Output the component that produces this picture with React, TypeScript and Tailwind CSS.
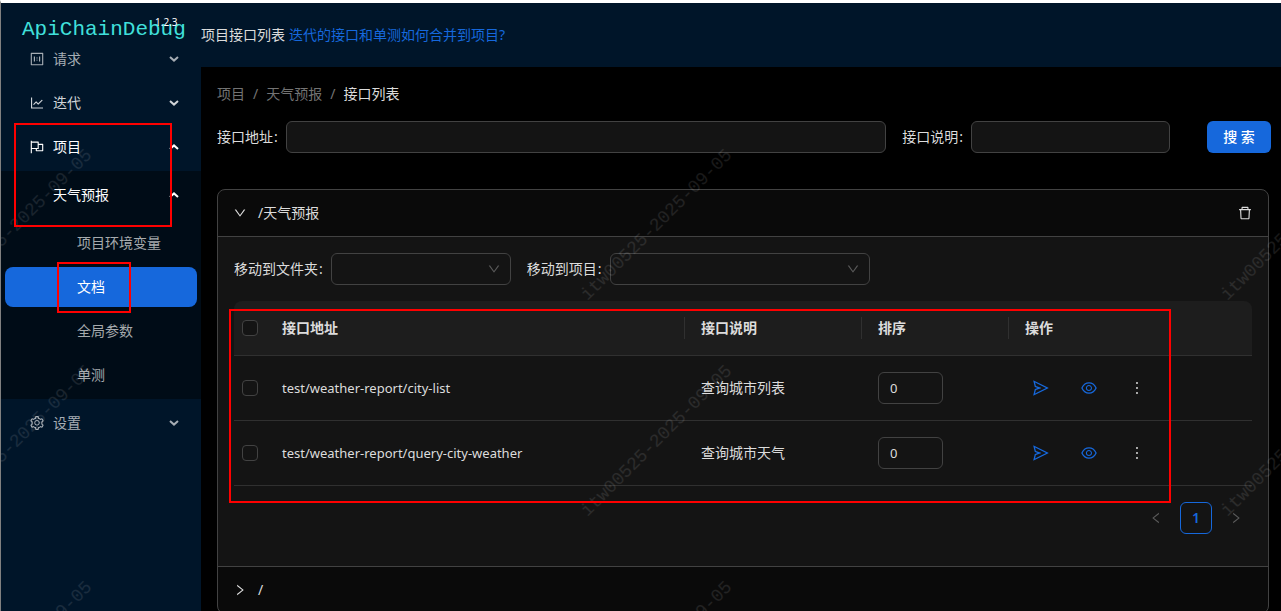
import type { ReactNode } from "react";
import {
  AiOutlineDelete,
  AiOutlineDown,
  AiOutlineEye,
  AiOutlineFlag,
  AiOutlineLeft,
  AiOutlineLineChart,
  AiOutlineMore,
  AiOutlineOneToOne,
  AiOutlineRight,
  AiOutlineSend,
  AiOutlineSetting,
} from "react-icons/ai";

function Caret({ open = false }: { open?: boolean }) {
  return (
    <svg viewBox="0 0 10 6" className="ml-auto h-[6px] w-[10px]" fill="none" stroke="currentColor" strokeWidth="2">
      {open ? <path d="M1 5 L5 1.4 L9 5" /> : <path d="M1 1 L5 4.6 L9 1" />}
    </svg>
  );
}

function MenuGroup({ icon, label, open, tone }: { icon?: ReactNode; label: string; open?: boolean; tone: string }) {
  return (
    <button
      type="button"
      aria-expanded={!!open}
      className={`mx-1 flex h-10 items-center gap-2 rounded-lg pr-[18px] ${icon ? "pl-6" : "pl-12"} ${tone}`}
    >
      {icon}
      <span>{label}</span>
      <Caret open={open} />
    </button>
  );
}

const docs = [
  { label: "项目环境变量", active: false },
  { label: "文档", active: true },
  { label: "全局参数", active: false },
  { label: "单测", active: false },
];

function Sidebar() {
  return (
    <aside className="flex w-[200px] shrink-0 flex-col bg-[#001529]">
      <div className="relative flex h-9 items-center pt-[18px] pl-[21px] font-['Liberation_Mono',monospace] text-[21px] leading-9 text-[#40e0dc]">
        ApiChainDebug
        <span className="absolute top-[13px] left-[154px] font-['Noto_Sans',sans-serif] text-[10px] leading-3 text-white">
          1.2.3
        </span>
      </div>
      <nav className="flex flex-col gap-1">
        <MenuGroup icon={<AiOutlineOneToOne size={16} />} label="请求" tone="text-[#a6adb4]" />
        <MenuGroup icon={<AiOutlineLineChart size={16} />} label="迭代" tone="text-[#d0d4d8]" />
        <MenuGroup icon={<AiOutlineFlag size={16} />} label="项目" open tone="text-white" />
        <div className="flex flex-col gap-1 bg-[#000c17] py-1">
          <MenuGroup label="天气预报" open tone="text-white" />
          <ul className="flex flex-col gap-1 pt-1">
            {docs.map((d) => (
              <li key={d.label} className="px-1">
                <a
                  href="#"
                  className={`flex h-10 items-center rounded-lg pl-[72px] ${
                    d.active ? "bg-[#1668dc] text-white" : "text-[#a6aaad]"
                  }`}
                >
                  {d.label}
                </a>
              </li>
            ))}
          </ul>
        </div>
        <MenuGroup icon={<AiOutlineSetting size={16} />} label="设置" tone="text-[#a6adb4]" />
      </nav>
    </aside>
  );
}

function SelectField({ id, label, width }: { id: string; label: string; width: string }) {
  return (
    <div className="flex items-center">
      <label htmlFor={id} className="mr-2">
        {label}
        <span className="ml-px">:</span>
      </label>
      <div className={`relative ${width}`}>
        <select id={id} className="h-8 w-full appearance-none rounded-md border border-[#424242] bg-[#141414] px-3">
          <option value="" />
        </select>
        <AiOutlineDown size={14} className="pointer-events-none absolute top-[9px] right-[10px] text-[#5a5a5a]" />
      </div>
    </div>
  );
}

const box = "block size-4 appearance-none rounded border border-[#424242] mx-auto";
const rows = [
  { path: "test/weather-report/city-list", desc: "查询城市列表" },
  { path: "test/weather-report/query-city-weather", desc: "查询城市天气" },
];

function ApiTable() {
  const divider = "border-l border-[#303030] pl-4 leading-[22px]";
  return (
    <table className="mt-4 w-full table-fixed border-separate border-spacing-0 text-left">
      <colgroup>
        <col className="w-8" />
        <col />
        <col className="w-[177px]" />
        <col className="w-[147px]" />
        <col className="w-[244px]" />
      </colgroup>
      <thead>
        <tr className="h-[55px] [&>th]:border-b [&>th]:border-[#303030]">
          <th className="rounded-tl-lg bg-[#1d1d1d]">
            <input type="checkbox" aria-label="全选" className={`${box} bg-[#141414]`} />
          </th>
          <th className="bg-[#1d1d1d] pl-4">接口地址</th>
          <th className="bg-[#1d1d1d]"><div className={divider}>接口说明</div></th>
          <th className="bg-[#1d1d1d]"><div className={divider}>排序</div></th>
          <th className="rounded-tr-lg bg-[#1d1d1d]"><div className={divider}>操作</div></th>
        </tr>
      </thead>
      <tbody>
        {rows.map((r) => (
          <tr key={r.path} className="h-[65px] [&>td]:border-b [&>td]:border-[#303030]">
            <td>
              <input type="checkbox" aria-label={r.path} className={box} />
            </td>
            <td className="pl-4 text-[13px]">{r.path}</td>
            <td className="pl-[17px]">{r.desc}</td>
            <td className="pl-[17px]">
              <input
                aria-label="排序"
                defaultValue="0"
                className="block h-8 w-[65px] rounded-md border border-[#424242] bg-[#141414] px-[11px] text-[13px]"
              />
            </td>
            <td className="pl-[17px]">
              <div className="flex gap-4">
                <button type="button" aria-label="发送" className="grid size-8 place-items-center text-[#1668dc]">
                  <AiOutlineSend size={18} />
                </button>
                <button type="button" aria-label="查看" className="grid size-8 place-items-center text-[#1668dc]">
                  <AiOutlineEye size={18} />
                </button>
                <button type="button" aria-label="更多" className="grid size-8 place-items-center">
                  <AiOutlineMore size={18} />
                </button>
              </div>
            </td>
          </tr>
        ))}
      </tbody>
    </table>
  );
}

function Field({ id, label, grow }: { id: string; label: string; grow?: boolean }) {
  return (
    <div className={`flex items-center ${grow ? "flex-1" : ""}`}>
      <label htmlFor={id} className="mr-2 shrink-0">
        {label}
        <span className="ml-px">:</span>
      </label>
      <input
        id={id}
        className={`h-8 rounded-md border border-[#424242] bg-[#141414] px-[11px] ${grow ? "w-full min-w-0" : "w-[199px]"}`}
      />
    </div>
  );
}

const marks = [
  "left-[-87px] top-[210px]",
  "left-[-87px] top-[426px]",
  "left-[-87px] top-[642px]",
  "left-[553px] top-[210px]",
  "left-[553px] top-[426px]",
  "left-[553px] top-[642px]",
  "left-[1193px] top-[210px]",
  "left-[1193px] top-[426px]",
  "left-[1193px] top-[642px]",
];

function Overlay() {
  return (
    <div aria-hidden="true" className="pointer-events-none absolute inset-0 overflow-hidden">
      {marks.map((m) => (
        <span
          key={m}
          className={`absolute -rotate-45 font-['Liberation_Mono',monospace] text-lg leading-6 whitespace-nowrap text-white/10 ${m}`}
        >
          itw00525-2025-09-05
        </span>
      ))}
      <div className="absolute top-[120px] left-[13px] h-[104px] w-[158px] border-2 border-[#ff0000]" />
      <div className="absolute top-[259px] left-[56px] h-[51px] w-[74px] border-2 border-[#ff0000]" />
      <div className="absolute top-[306px] right-[110px] left-[228px] h-[194px] border-2 border-[#ff0000]" />
    </div>
  );
}

export default function App() {
  return (
    <div className="relative flex h-screen overflow-hidden border-t-3 border-l border-t-white border-l-[#808080] bg-black font-['Noto_Sans','Noto_Sans_CJK_SC',sans-serif] text-sm leading-[22px] text-[#dcdcdc]">
      <Sidebar />
      <div className="min-w-0 flex-1">
        <header className="flex h-16 items-center gap-1 bg-[#001529]">
          <span>项目接口列表</span>
          <a href="#" className="text-[#1668dc]">迭代的接口和单测如何合并到项目?</a>
        </header>
        <main className="pt-4 pr-[10px] pl-4">
          <nav className="flex gap-2 text-[#737373]">
            <a href="#">项目</a>
            <span>/</span>
            <a href="#">天气预报</a>
            <span>/</span>
            <span className="text-[#dcdcdc]">接口列表</span>
          </nav>
          <form className="mt-4 flex items-center gap-4">
            <Field id="path" label="接口地址" grow />
            <Field id="desc" label="接口说明" />
            <button type="button" className="ml-[21px] h-8 w-16 rounded-md bg-[#1668dc] font-medium text-white">
              搜 索
            </button>
          </form>
          <section className="mt-9 mr-0.5 overflow-hidden rounded-lg border border-[#424242] bg-[#0a0a0a]">
            <div className="flex h-[46px] items-center px-[15px]">
              <button type="button" aria-expanded="true" className="flex items-center gap-[11px]">
                <AiOutlineDown size={14} />
                /天气预报
              </button>
              <button type="button" aria-label="删除" className="ml-auto">
                <AiOutlineDelete size={16} />
              </button>
            </div>
            <div className="border-y border-[#424242] bg-[#141414] px-4 pt-4 pb-8">
              <div className="flex gap-4">
                <SelectField id="folder" label="移动到文件夹" width="w-[180px]" />
                <SelectField id="project" label="移动到项目" width="w-[260px]" />
              </div>
              <ApiTable />
              <div className="mt-4 flex justify-end gap-2 text-[#5a5a5a]">
                <button type="button" aria-label="上一页" className="grid size-8 place-items-center">
                  <AiOutlineLeft size={14} />
                </button>
                <button type="button" className="size-8 rounded-md border border-[#1668dc] font-semibold text-[#1668dc]">
                  1
                </button>
                <button type="button" aria-label="下一页" className="grid size-8 place-items-center">
                  <AiOutlineRight size={14} />
                </button>
              </div>
            </div>
            <button type="button" aria-expanded="false" className="flex h-[46px] w-full items-center gap-[11px] px-[15px]">
              <AiOutlineRight size={14} />
              /
            </button>
          </section>
        </main>
      </div>
      <Overlay />
    </div>
  );
}
